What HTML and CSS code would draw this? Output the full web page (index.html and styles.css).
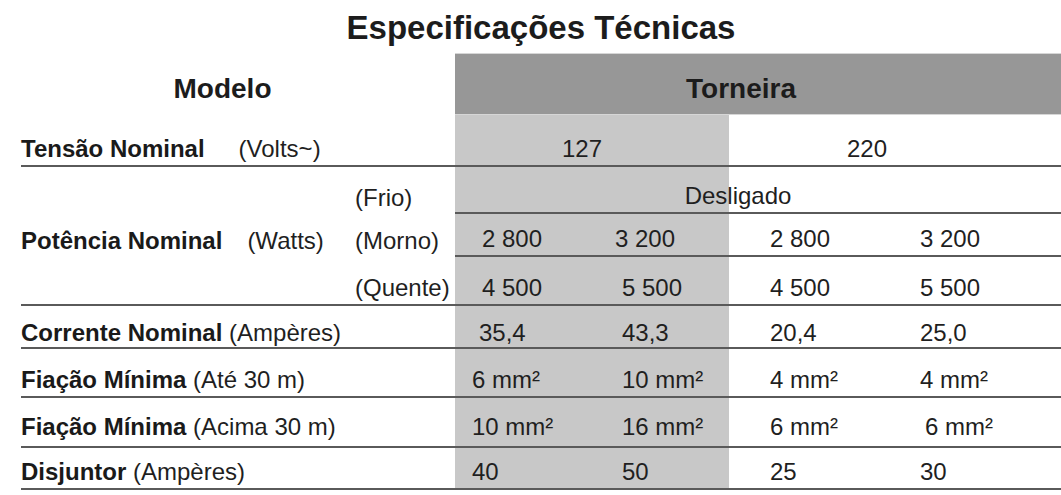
FILE: index.html
```html
<!DOCTYPE html>
<html lang="pt">
<head>
<meta charset="utf-8">
<title>Especificações Técnicas</title>
<link rel="stylesheet" href="styles.css">
</head>
<body>
<div class="sheet">
  <h1 class="title">Especificações Técnicas</h1>
  <div class="table">
    <div class="row band">
      <div class="head-label">Modelo</div>
      <div class="head-cell">Torneira</div>
    </div>
    <div class="body">
      <div class="row full r1">
        <div class="label"><b>Tensão Nominal</b><span class="gap-volts">(Volts~)</span></div>
        <div class="cell span-127">127</div>
        <div class="cell span-220">220</div>
      </div>
      <div class="row part r2">
        <div class="label split"><span></span><span>(Frio)</span></div>
        <div class="cell ruled span-all">Desligado</div>
      </div>
      <div class="row part r3">
        <div class="label split"><span><b>Potência Nominal</b><span class="gap-watts">(Watts)</span></span><span>(Morno)</span></div>
        <div class="cell ruled c1 pot">2 800</div>
        <div class="cell ruled c2 pot-2">3 200</div>
        <div class="cell ruled c3">2 800</div>
        <div class="cell ruled c4">3 200</div>
        <div class="cell ruled"></div>
      </div>
      <div class="row full r4">
        <div class="label split"><span></span><span>(Quente)</span></div>
        <div class="cell c1 pot">4 500</div>
        <div class="cell c2">5 500</div>
        <div class="cell c3">4 500</div>
        <div class="cell c4">5 500</div>
      </div>
      <div class="row full r5">
        <div class="label"><b>Corrente Nominal</b> (Ampères)</div>
        <div class="cell c1 cor">35,4</div>
        <div class="cell c2">43,3</div>
        <div class="cell c3">20,4</div>
        <div class="cell c4">25,0</div>
      </div>
      <div class="row full r6">
        <div class="label"><b>Fiação Mínima</b> (Até 30 m)</div>
        <div class="cell c1">6 mm²</div>
        <div class="cell c2">10 mm²</div>
        <div class="cell c3">4 mm²</div>
        <div class="cell c4">4 mm²</div>
      </div>
      <div class="row full r7">
        <div class="label"><b>Fiação Mínima</b> (Acima 30 m)</div>
        <div class="cell c1">10 mm²</div>
        <div class="cell c2">16 mm²</div>
        <div class="cell c3">6 mm²</div>
        <div class="cell c4 c4-wide">6 mm²</div>
      </div>
      <div class="row full r8">
        <div class="label"><b>Disjuntor</b> (Ampères)</div>
        <div class="cell c1">40</div>
        <div class="cell c2">50</div>
        <div class="cell c3">25</div>
        <div class="cell c4">30</div>
      </div>
    </div>
  </div>
</div>
</body>
</html>
```

FILE: styles.css
```css
* { box-sizing: border-box; }

html, body {
  margin: 0;
  padding: 0;
  background: #ffffff;
}

body {
  font-family: "Liberation Sans", Arial, Helvetica, sans-serif;
  color: #1f1f1f;
  width: 1061px;
  height: 495px;
  overflow: hidden;
}

.sheet {
  padding-left: 21px;
}

.title {
  margin: 10px 0 7px 0;
  height: 36px;
  line-height: 36px;
  font-size: 33px;
  font-weight: 700;
  text-align: center;
  color: #1c1c1c;
}

.row {
  display: grid;
  grid-template-columns: 434px 136px 138px 138px 138px 1fr;
  font-size: 24px;
  line-height: 28px;
}

.band {
  height: 62px;
  font-size: 28px;
  line-height: 32px;
  font-weight: 700;
  color: #1c1c1c;
}

.head-label {
  display: flex;
  align-items: flex-end;
  justify-content: center;
  padding: 0 31px 10px 0;
}

.head-cell {
  grid-column: 2 / -1;
  display: flex;
  align-items: flex-end;
  justify-content: center;
  background: #979797;
  border-top: 1px solid #d6d6d6;
  border-bottom: 1px solid #d6d6d6;
  padding: 0 34px 9px 0;
}

.body {
  background: linear-gradient(to right, transparent 434px, #c8c8c8 434px, #c8c8c8 708px, transparent 708px);
}

.full,
.ruled {
  border-bottom: 2px solid #5a5a5a;
}

.r1 { height: 52px; }
.r2 { height: 47px; }
.r3 { height: 43px; }
.r4 { height: 49px; }
.r5 { height: 43px; }
.r6 { height: 49px; }
.r7 { height: 50px; }
.r8 { height: 42px; }

.label,
.cell {
  display: flex;
  align-items: flex-end;
  padding-bottom: 2px;
  white-space: pre;
}

.label.split {
  display: grid;
  grid-template-columns: 334px 1fr;
  align-items: end;
}

.r7 .label,
.r7 .cell {
  padding-bottom: 5px;
}

.r5 .label,
.r5 .cell {
  padding-bottom: 0;
}

.label b {
  font-weight: 700;
  color: #1a1a1a;
}

.gap-volts { margin-left: 34px; }
.gap-watts { margin-left: 25px; }

.span-127 {
  grid-column: 2 / 4;
  justify-content: center;
  padding-right: 20px;
}

.span-220 {
  grid-column: 4 / 6;
  justify-content: center;
}

.span-all {
  grid-column: 2 / -1;
  justify-content: center;
  padding-right: 40px;
}

.c1 { padding-left: 17px; }
.c1.pot { padding-left: 27px; }
.c1.cor { padding-left: 24px; }
.c2 { padding-left: 31px; }
.c2.pot-2 { padding-left: 24px; }
.c3 { padding-left: 41px; }
.c4 { padding-left: 53px; }
.c4.c4-wide { padding-left: 58px; }
```
